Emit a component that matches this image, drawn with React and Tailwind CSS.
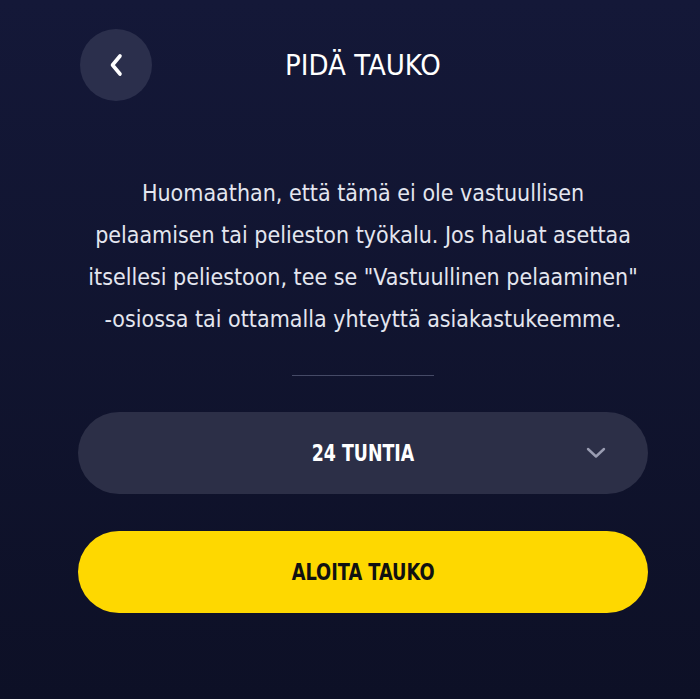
import React from "react";

const font = {
  fontFamily: '"Liberation Sans Narrow", "DejaVu Sans Condensed", Roboto, sans-serif',
};

function BackIcon() {
  return (
    <svg width="20" height="28" viewBox="0 0 20 28" fill="none">
      <path d="M14 5 L6.5 14 L14 23" stroke="white" strokeWidth="3.6" strokeLinecap="round" strokeLinejoin="round" />
    </svg>
  );
}

function ChevronDown() {
  return (
    <svg width="20" height="12" viewBox="0 0 20 12" fill="none">
      <path d="M2 2 L10 9.5 L18 2" stroke="#9a9db2" strokeWidth="2.4" strokeLinecap="round" strokeLinejoin="round" />
    </svg>
  );
}

export default function App() {
  return (
    <div
      className="min-h-[699px] w-full bg-gradient-to-b from-[#141838] to-[#0d1026] text-white"
      style={font}
    >
      <div className="ml-[78px] w-[570px] pt-[29px]">
        {/* header */}
        <div className="grid grid-cols-[72px_1fr_72px] items-center">
          <button
            type="button"
            className="ml-[2px] flex h-[72px] w-[72px] items-center justify-center rounded-full bg-[#2b2f4c]"
          >
            <BackIcon />
          </button>
          <h1 className="pt-[2px] text-center text-[29px] font-medium tracking-normal">PIDÄ TAUKO</h1>
          <div />
        </div>

        {/* notice */}
        <p className="mt-[71px] text-center text-[23px] leading-[42px] text-[#e4e6ef]">
          Huomaathan, että tämä ei ole vastuullisen
          <br />
          pelaamisen tai pelieston työkalu. Jos haluat asettaa
          <br />
          itsellesi peliestoon, tee se "Vastuullinen pelaaminen"
          <br />
          -osiossa tai ottamalla yhteyttä asiakastukeemme.
        </p>

        <div className="mx-auto mt-[35px] h-px w-[142px] bg-[#454a66]" />

        {/* duration select */}
        <button
          type="button"
          className="relative mt-[36px] flex h-[82px] w-full items-center justify-center rounded-full bg-[#2c2f47]"
        >
          <span className="inline-block scale-x-[0.84] text-[23px] font-bold">24 TUNTIA</span>
          <span className="absolute right-[42px] top-1/2 -translate-y-1/2">
            <ChevronDown />
          </span>
        </button>

        <button
          type="button"
          className="mt-[37px] flex h-[82px] w-full items-center justify-center rounded-full bg-[#fed800] text-[#111]"
        >
          <span className="inline-block scale-x-[0.86] text-[23px] font-bold">ALOITA TAUKO</span>
        </button>
      </div>
    </div>
  );
}
